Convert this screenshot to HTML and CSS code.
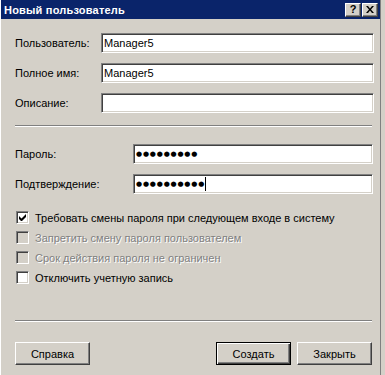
FILE: index.html
```html
<!DOCTYPE html>
<html lang="ru">
<head>
    <meta charset="UTF-8">
    <title>Новый пользователь</title>
    <link rel="stylesheet" href="styles.css">
</head>
<body>
    <div class="window">
        <div class="titlebar">
            <span class="title">Новый пользователь</span>
            <div class="title-buttons">
                <span class="tbtn">?</span>
                <span class="tbtn close">
                    <svg width="8" height="7" viewBox="0 0 8 7"><path d="M0 0h2l2 2.5L6 0h2L5 3.5 8 7H6L4 4.5 2 7H0l3-3.5z" fill="#000"/></svg>
                </span>
            </div>
        </div>

        <div class="content">
            <div class="field first">
                <span class="label">Пользователь:</span>
                <div class="input">Manager5</div>
            </div>
            <div class="field">
                <span class="label">Полное имя:</span>
                <div class="input">Manager5</div>
            </div>
            <div class="field">
                <span class="label">Описание:</span>
                <div class="input"></div>
            </div>

            <div class="separator top-sep"></div>

            <div class="field pwd first-pwd">
                <span class="label">Пароль:</span>
                <div class="input"><span class="dots">●●●●●●●●●</span></div>
            </div>
            <div class="field pwd">
                <span class="label">Подтверждение:</span>
                <div class="input"><span class="dots">●●●●●●●●●●</span><span class="caret"></span></div>
            </div>

            <div class="checks">
                <div class="check">
                    <span class="box">
                        <svg width="7" height="7" viewBox="0 0 7 7"><path d="M0 2v3l2 2h1l4-4V0L2.5 4.5z" fill="#000"/></svg>
                    </span>
                    <span>Требовать смены пароля при следующем входе в систему</span>
                </div>
                <div class="check disabled">
                    <span class="box"></span>
                    <span>Запретить смену пароля пользователем</span>
                </div>
                <div class="check disabled">
                    <span class="box"></span>
                    <span>Срок действия пароля не ограничен</span>
                </div>
                <div class="check">
                    <span class="box"></span>
                    <span>Отключить учетную запись</span>
                </div>
            </div>

            <div class="separator bottom-sep"></div>

            <div class="buttons">
                <button class="btn">Справка</button>
                <div class="right-buttons">
                    <button class="btn default">Создать</button>
                    <button class="btn">Закрыть</button>
                </div>
            </div>
        </div>
    </div>
</body>
</html>
```

FILE: styles.css
```css
body {
    margin: 0;
    background: #d4d0c8;
    font-family: "Liberation Sans", Arial, sans-serif;
    font-size: 11px;
    color: #000;
    overflow: hidden;
}
.window {
    width: 379px;
    height: 375px;
    border-left: 1px solid #fff;
    border-right: 1px solid #808080;
    background: #d4d0c8;
}
.titlebar {
    height: 19px;
    background: #0a246a;
    display: flex;
    align-items: center;
    justify-content: space-between;
    padding: 0 2px 0 3px;
}
.title {
    color: #fff;
    font-weight: bold;
    font-size: 11px;
    letter-spacing: 0.2px;
}
.title-buttons {
    display: flex;
    gap: 1px;
}
.tbtn {
    width: 14px;
    height: 12px;
    background: #d4d0c8;
    border-top: 1px solid #fff;
    border-left: 1px solid #fff;
    border-right: 1px solid #404040;
    border-bottom: 1px solid #404040;
    box-shadow: inset -1px -1px 0 #808080;
    display: flex;
    align-items: center;
    justify-content: center;
    font-weight: bold;
    font-size: 11px;
    line-height: 11px;
}
.content {
    padding: 0 0 0 14px;
}
.field {
    display: flex;
    align-items: center;
    height: 21px;
    margin-top: 9px;
}
.field.first {
    margin-top: 13px;
}
.label {
    width: 86px;
}
.input {
    width: 267px;
    height: 17px;
    background: #fff;
    border-top: 1px solid #808080;
    border-left: 1px solid #808080;
    border-right: 1px solid #fff;
    border-bottom: 1px solid #fff;
    box-shadow: inset 1px 1px 0 #404040, inset -1px -1px 0 #d4d0c8;
    padding: 1px 2px 0 2px;
    display: flex;
    align-items: center;
}
.pwd .label {
    width: 118px;
}
.pwd .input {
    width: 234px;
}
.field.first-pwd {
    margin-top: 16px;
}
.dots {
    font-family: "DejaVu Sans", sans-serif;
    font-size: 7px;
    letter-spacing: 0.8px;
    padding-left: 0;
}
.caret {
    display: inline-block;
    width: 1px;
    height: 14px;
    background: #000;
}
.separator {
    width: 357px;
    height: 1px;
    background: #808080;
    border-bottom: 1px solid #fff;
}
.top-sep {
    margin-top: 12px;
}
.checks {
    margin-top: 17px;
    display: flex;
    flex-direction: column;
    gap: 7px;
}
.check {
    display: flex;
    align-items: center;
    gap: 6px;
    height: 13px;
    padding-left: 1px;
}
.box {
    width: 9px;
    height: 9px;
    background: #fff;
    border-top: 1px solid #808080;
    border-left: 1px solid #808080;
    border-right: 1px solid #fff;
    border-bottom: 1px solid #fff;
    box-shadow: inset 1px 1px 0 #404040, inset -1px -1px 0 #d4d0c8;
    padding: 1px;
    display: flex;
    align-items: center;
    justify-content: center;
}
.check.disabled {
    color: #808080;
    text-shadow: 1px 1px 0 #fff;
}
.check.disabled .box {
    background: #d4d0c8;
}
.bottom-sep {
    margin-top: 36px;
}
.buttons {
    width: 357px;
    margin-top: 20px;
    display: flex;
    justify-content: space-between;
}
.right-buttons {
    display: flex;
    gap: 6px;
}
.btn {
    width: 75px;
    height: 23px;
    margin: 0;
    padding: 0;
    background: #d4d0c8;
    font-family: "Liberation Sans", Arial, sans-serif;
    font-size: 11px;
    color: #000;
    border-top: 1px solid #fff;
    border-left: 1px solid #fff;
    border-right: 1px solid #404040;
    border-bottom: 1px solid #404040;
    box-shadow: inset -1px -1px 0 #808080;
}
.btn.default {
    border: 1px solid #000;
    box-shadow: inset 1px 1px 0 #fff, inset -1px -1px 0 #404040, inset -2px -2px 0 #808080;
}
```
